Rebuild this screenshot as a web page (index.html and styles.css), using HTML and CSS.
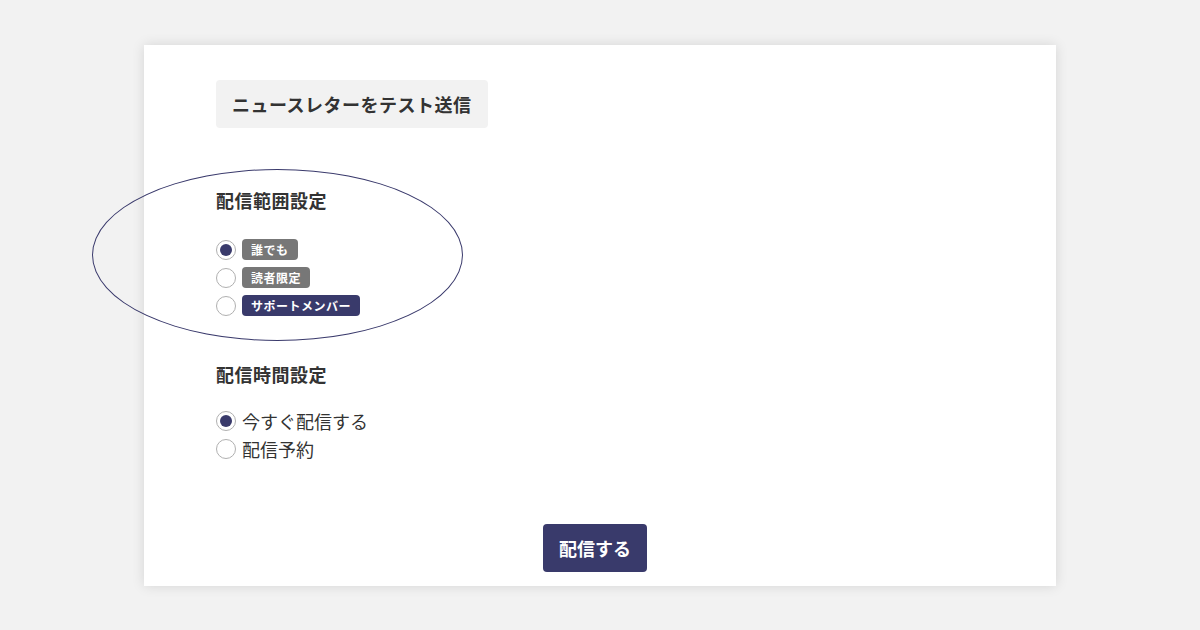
FILE: index.html
```html
<!DOCTYPE html>
<html lang="ja">
<head>
<meta charset="utf-8">
<title>配信設定</title>
<link rel="stylesheet" href="styles.css">
</head>
<body>
<div class="card">
  <div class="ring"></div>
  <button class="test-btn" type="button">ニュースレターをテスト送信</button>

  <h2 class="heading heading-first">配信範囲設定</h2>
  <ul class="options">
    <li class="option"><span class="radio checked"></span><span class="badge gray">誰でも</span></li>
    <li class="option"><span class="radio"></span><span class="badge gray">読者限定</span></li>
    <li class="option"><span class="radio"></span><span class="badge navy">サポートメンバー</span></li>
  </ul>

  <h2 class="heading heading-second">配信時間設定</h2>
  <ul class="options options-text">
    <li class="option"><span class="radio checked"></span><span class="label">今すぐ配信する</span></li>
    <li class="option"><span class="radio"></span><span class="label">配信予約</span></li>
  </ul>

  <div class="footer">
    <button class="submit-btn" type="button">配信する</button>
  </div>
</div>
</body>
</html>
```

FILE: styles.css
```css
* { box-sizing: border-box; }

html, body {
  margin: 0;
  padding: 0;
}

body {
  width: 1200px;
  height: 630px;
  background: #f2f2f2;
  font-family: "Noto Sans CJK JP", "Noto Sans", sans-serif;
  color: #333;
  display: flex;
  align-items: center;
  justify-content: center;
}

.card {
  position: relative;
  width: 912px;
  height: 541px;
  background: #fff;
  box-shadow: 0 0 12px rgba(0, 0, 0, 0.12);
  padding: 35px 72px 14px;
  display: flex;
  flex-direction: column;
  align-items: flex-start;
}

.ring {
  position: absolute;
  left: -52px;
  top: 124px;
  width: 371px;
  height: 172px;
  border: 1px solid #3a3a6c;
  border-radius: 50%;
  pointer-events: none;
}

.test-btn {
  height: 48px;
  padding: 0 16px;
  border: none;
  border-radius: 4px;
  background: #f2f2f2;
  color: #333;
  font-family: inherit;
  font-size: 18px;
  font-weight: 700;
  letter-spacing: 0.5px;
  line-height: 48px;
}

.heading {
  margin: 0;
  font-size: 18px;
  font-weight: 700;
  line-height: 26px;
  letter-spacing: 0.5px;
  color: #333;
}

.heading-first { margin-top: 59px; }
.heading-second { margin-top: 41px; }

.options {
  list-style: none;
  margin: 23px 0 0;
  padding: 0;
}

.options-text { margin-top: 20px; }

.option {
  height: 28px;
  display: flex;
  align-items: center;
  gap: 6px;
}

.radio {
  width: 20px;
  height: 20px;
  border: 1.5px solid #b0b0b0;
  border-radius: 50%;
  display: flex;
  align-items: center;
  justify-content: center;
  flex: none;
}

.radio.checked::after {
  content: "";
  width: 12px;
  height: 12px;
  border-radius: 50%;
  background: #393a6b;
}

.badge {
  height: 21px;
  padding: 0 9px;
  border-radius: 4px;
  color: #fff;
  font-size: 12px;
  font-weight: 700;
  line-height: 21px;
  letter-spacing: 0.5px;
}

.badge.gray { background: #777; }
.badge.navy { background: #393a6b; }

.label {
  font-size: 18px;
  line-height: 28px;
  color: #333;
}

.footer {
  margin-top: auto;
  width: 100%;
  display: flex;
  justify-content: center;
  padding-right: 10px;
}

.submit-btn {
  height: 48px;
  padding: 0 16px;
  border: none;
  border-radius: 4px;
  background: #393a6b;
  color: #fff;
  font-family: inherit;
  font-size: 18px;
  font-weight: 700;
  line-height: 48px;
}
```
